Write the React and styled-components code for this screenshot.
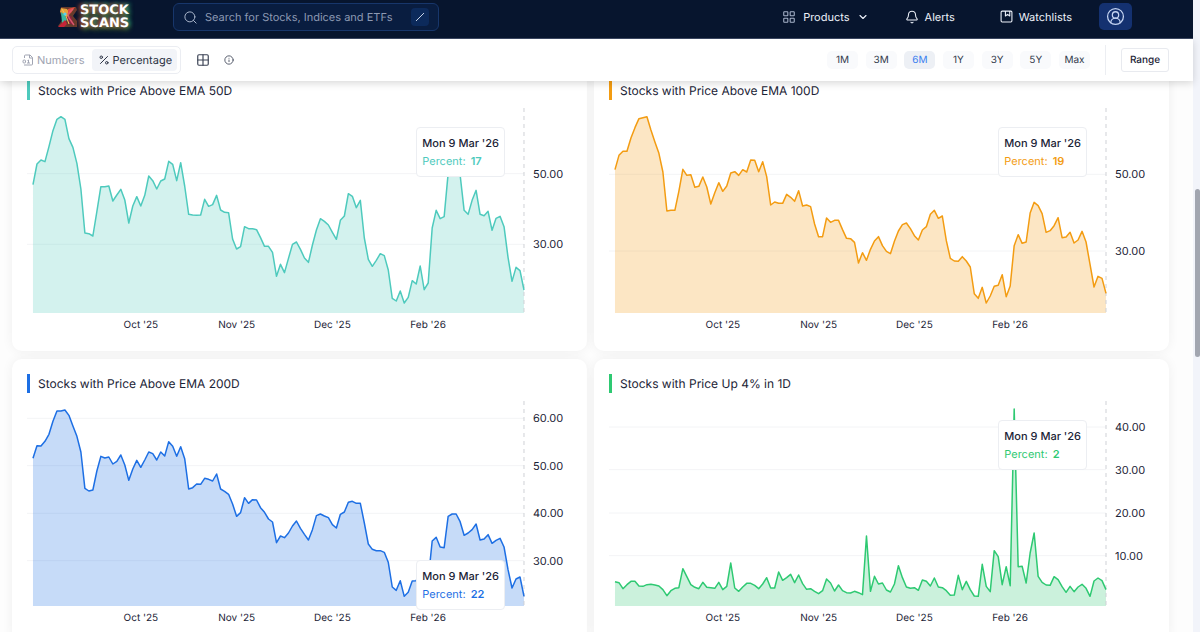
import React, { useState } from 'react';
import styled, { createGlobalStyle } from 'styled-components';
import { Search, LayoutGrid, ChevronDown, Bell, CircleUserRound, Percent, Grid2x2, Info } from 'lucide-react';

// Samples are in plot units, a larger number is lower on the plot
const STEP = 12;
const PLOT_HEIGHT = 615;

const EMA_50 = [
  314, 252, 240, 245, 200, 152, 118, 110, 118, 176, 202, 250, 327, 459, 461, 468, 395, 320, 320, 318, 363, 345, 328,
  360, 429, 378, 350, 378, 346, 288, 302, 327, 303, 297, 244, 253, 302, 248, 318, 403, 405, 406, 405, 358, 379, 374,
  346, 390, 397, 398, 477, 507, 500, 440, 446, 446, 449, 473, 499, 499, 517, 589, 553, 578, 535, 493, 486, 508, 534,
  547, 495, 450, 416, 424, 435, 457, 478, 421, 408, 341, 349, 383, 361, 474, 538, 559, 541, 521, 527, 570, 655, 663,
  633, 669, 652, 602, 612, 558, 629, 609, 444, 391, 416, 410, 280, 230, 225, 285, 391, 403, 361, 331, 403, 407, 394,
  451, 415, 409, 440, 532, 604, 562, 572, 630,
];

const EMA_100 = [
  269, 226, 214, 214, 174, 143, 116, 113, 110, 150, 186, 220, 276, 393, 391, 391, 334, 268, 286, 284, 322, 319, 291,
  321, 372, 338, 308, 334, 318, 279, 275, 286, 269, 276, 240, 241, 275, 245, 290, 375, 366, 370, 370, 343, 352, 364,
  332, 378, 375, 380, 432, 470, 470, 414, 427, 421, 421, 449, 475, 476, 487, 549, 518, 541, 508, 483, 470, 497, 514,
  521, 484, 453, 434, 429, 446, 467, 480, 450, 440, 403, 391, 415, 408, 482, 535, 543, 544, 530, 543, 561, 641, 655,
  622, 669, 648, 619, 616, 584, 650, 618, 497, 464, 490, 486, 399, 367, 377, 401, 457, 452, 437, 413, 473, 471, 457,
  489, 480, 454, 486, 553, 621, 589, 595, 640,
];

const EMA_200 = [
  266, 228, 229, 215, 194, 155, 124, 124, 121, 137, 169, 200, 247, 356, 364, 361, 304, 260, 265, 262, 283, 275, 256,
  286, 332, 298, 272, 293, 271, 247, 252, 271, 247, 259, 216, 230, 260, 231, 267, 358, 354, 343, 344, 326, 329, 334,
  313, 358, 365, 374, 403, 440, 429, 384, 401, 390, 391, 414, 428, 448, 457, 519, 499, 504, 490, 469, 454, 476, 494,
  511, 480, 438, 433, 439, 444, 465, 475, 434, 427, 398, 395, 401, 401, 460, 523, 539, 543, 543, 548, 578, 652, 662,
  633, 680, 668, 634, 633, 605, 655, 632, 514, 503, 532, 534, 440, 433, 433, 456, 497, 490, 480, 463, 511, 508, 495,
  521, 512, 506, 532, 600, 655, 628, 622, 680,
];

const UP_4 = [
  636, 639, 657, 645, 635, 635, 649, 650, 645, 644, 646, 649, 660, 678, 663, 656, 654, 597, 621, 645, 653, 657, 638,
  653, 654, 656, 638, 660, 650, 580, 655, 665, 652, 641, 641, 647, 657, 643, 624, 655, 655, 607, 632, 624, 614, 639,
  616, 642, 659, 657, 665, 672, 663, 628, 640, 664, 646, 663, 669, 670, 665, 669, 675, 499, 665, 620, 643, 640, 661,
  667, 643, 588, 624, 652, 656, 654, 662, 631, 635, 649, 625, 652, 654, 663, 677, 676, 617, 660, 635, 660, 679, 680,
  584, 650, 666, 543, 561, 645, 591, 648, 118, 591, 590, 640, 550, 490, 620, 638, 646, 647, 621, 630, 651, 668, 650,
  666, 652, 644, 656, 680, 634, 625, 633, 660,
];

const CHARTS = [
  {
    title: 'Stocks with Price Above EMA 50D',
    color: '#4ecabd',
    top: 84,
    samples: EMA_50,
    ticks: [{ label: '50.00', at: 281 }, { label: '30.00', at: 493 }],
    percent: 17,
    tooltipTop: 19,
  },
  {
    title: 'Stocks with Price Above EMA 100D',
    color: '#f39c12',
    top: 84,
    samples: EMA_100,
    ticks: [{ label: '50.00', at: 283 }, { label: '30.00', at: 513 }],
    percent: 19,
    tooltipTop: 19,
  },
  {
    title: 'Stocks with Price Above EMA 200D',
    color: '#1d6fe4',
    top: 94,
    samples: EMA_200,
    ticks: [
      { label: '60.00', at: 146 },
      { label: '50.00', at: 288 },
      { label: '40.00', at: 431 },
      { label: '30.00', at: 573 },
    ],
    percent: 22,
    tooltipTop: 159,
  },
  {
    title: 'Stocks with Price Up 4% in 1D',
    color: '#2ec972',
    top: 94,
    samples: UP_4,
    ticks: [
      { label: '40.00', at: 172 },
      { label: '30.00', at: 300 },
      { label: '20.00', at: 430 },
      { label: '10.00', at: 558 },
    ],
    percent: 2,
    tooltipTop: 19,
  },
];

const MONTHS = ["Oct '25", "Nov '25", "Dec '25", "Feb '26"];
const RANGES = ['1M', '3M', '6M', '1Y', '3Y', '5Y', 'Max'];

function Logo() {
  return (
    <LogoLink href="/" aria-label="Stock Scans">
      <svg width="22" height="26" viewBox="0 0 22 26" fill="none">
        <path d="M4 3h15l1 3-4 6 4 5v6H3l-2-1 5-7-3-6z" fill="#8f4a2c" opacity="0.7" />
        <path d="M4 4l6 1 3 4-2 4-4-2-4-3z" fill="#e8a13a" />
        <path d="M11 5l7-2-4 6-3 2z" fill="#e2483c" />
        <path d="M4 8l4 3 2 5-5 3z" fill="#3bb8a0" />
        <path d="M9 13l5-1 3 9-6-2z" fill="#8c1f3f" />
        <path d="M1 23l7-7 2 4-3 3z" fill="#c42438" />
        <path d="M16 5l-5 5 1 4 5 7" stroke="#d95a6c" strokeWidth="1.4" />
        <path d="M5 5l4 7 3 8" stroke="#f2c65a" strokeWidth="1" />
        <circle cx="8" cy="10" r="1.6" fill="#5ad1f0" />
      </svg>
      <LogoText>
        STOCK
        <br />
        SCANS
      </LogoText>
    </LogoLink>
  );
}

function WatchlistIcon() {
  return (
    <svg width="13" height="13" viewBox="0 0 24 24" fill="none" stroke="currentColor" strokeWidth="2">
      <rect x="2" y="2" width="20" height="20" rx="2" />
      <path d="M10 2v9l4-3 4 3V2" strokeLinejoin="round" />
    </svg>
  );
}

function NumbersIcon() {
  return (
    <svg width="12" height="12" viewBox="0 0 24 24" fill="none" stroke="currentColor" strokeWidth="2">
      <path d="M5 8V4a2 2 0 0 1 2-2h9l5 5v13a2 2 0 0 1-2 2H4" strokeLinejoin="round" />
      <path d="M15 2v6h6" />
      <rect x="2" y="12" width="5" height="6" rx="2" />
      <path d="M11 13l2-1v6M10 18h6" />
    </svg>
  );
}

function ChartCard({ chart }) {
  const { title, color, top, samples, ticks, percent, tooltipTop } = chart;
  const right = (samples.length - 1) * STEP;
  const bottom = top + PLOT_HEIGHT;
  const line = samples.map((y, i) => `${i * STEP},${y}`).join(' ');

  return (
    <Card>
      <CardTitle $color={color}>{title}</CardTitle>
      <ChartBody>
        <Plot>
          <PlotSvg viewBox={`-18 ${top} ${right + 18} ${PLOT_HEIGHT}`} preserveAspectRatio="none" aria-hidden="true">
            {ticks.map((tick) => (
              <GridLine key={tick.label} x1={-18} x2={right} y1={tick.at} y2={tick.at} />
            ))}
            <polygon points={`0,${bottom} ${line} ${right},${bottom}`} fill={color} fillOpacity="0.25" />
            <Cursor x1={right} x2={right} y1={top} y2={bottom} />
            <Line points={line} stroke={color} />
          </PlotSvg>
          <Tooltip $top={tooltipTop}>
            <TooltipDate>Mon 9 Mar '26</TooltipDate>
            <TooltipValue $color={color}>
              Percent: <b>{percent}</b>
            </TooltipValue>
          </Tooltip>
        </Plot>
        <YAxis>
          {ticks.map((tick) => (
            <YLabel key={tick.label} style={{ top: `${((tick.at - top) / PLOT_HEIGHT) * 100}%` }}>
              {tick.label}
            </YLabel>
          ))}
        </YAxis>
        <XAxis>
          {MONTHS.map((month) => (
            <span key={month}>{month}</span>
          ))}
        </XAxis>
      </ChartBody>
    </Card>
  );
}

function App() {
  const [mode, setMode] = useState('percentage');
  const [range, setRange] = useState('6M');

  return (
    <>
      <GlobalStyle />
      <Shell>
        <Page>
          <Header>
            <Logo />
            <SearchBox>
              <Search size={15} strokeWidth={1.6} />
              <SearchInput type="text" aria-label="Search" placeholder="Search for Stocks, Indices and ETFs" />
              <SlashKey>
                <svg width="10" height="10" viewBox="0 0 10 10" stroke="currentColor">
                  <path d="M1 9l8-8" />
                </svg>
              </SlashKey>
            </SearchBox>
            <Nav>
              <NavButton type="button">
                <LayoutGrid size={14} strokeWidth={1.8} />
                Products
                <ChevronDown size={12} strokeWidth={2.2} />
              </NavButton>
              <NavLink href="#alerts">
                <Bell size={14} strokeWidth={1.8} />
                Alerts
              </NavLink>
              <NavLink href="#watchlists">
                <WatchlistIcon />
                Watchlists
              </NavLink>
              <UserButton type="button" aria-label="Account">
                <CircleUserRound size={19} strokeWidth={1.6} />
              </UserButton>
            </Nav>
          </Header>

          <Toolbar>
            <Toggle>
              <ToggleButton type="button" $active={mode === 'numbers'} onClick={() => setMode('numbers')}>
                <NumbersIcon />
                Numbers
              </ToggleButton>
              <ToggleButton type="button" $active={mode === 'percentage'} onClick={() => setMode('percentage')}>
                <Percent size={12} strokeWidth={2} />
                Percentage
              </ToggleButton>
            </Toggle>
            <IconButton type="button" aria-label="Grid layout">
              <Grid2x2 size={14} strokeWidth={2} />
            </IconButton>
            <IconButton type="button" aria-label="Info">
              <Info size={10} strokeWidth={2} />
            </IconButton>
            <Ranges>
              {RANGES.map((item) => (
                <RangeButton key={item} type="button" $active={item === range} onClick={() => setRange(item)}>
                  {item}
                </RangeButton>
              ))}
            </Ranges>
            <Divider />
            <CustomRange type="button">Range</CustomRange>
          </Toolbar>

          <Cards>
            {CHARTS.map((chart) => (
              <ChartCard key={chart.title} chart={chart} />
            ))}
          </Cards>
        </Page>
        <ScrollTrack>
          <ScrollThumb />
        </ScrollTrack>
      </Shell>
    </>
  );
}

const GlobalStyle = createGlobalStyle`
  * {
    box-sizing: border-box;
  }

  body {
    margin: 0;
    background: #fdfdfd;
    color: #1b2336;
    font-family: Inter, "Liberation Sans", sans-serif;
    font-size: 11px;
    text-rendering: geometricPrecision;
  }

  button, input {
    margin: 0;
    padding: 0;
    border: 0;
    background: none;
    color: inherit;
    font: inherit;
    text-rendering: inherit;
  }

  button {
    cursor: pointer;
  }
`;

const Shell = styled.div`
  display: flex;
  height: 100vh;
  overflow: hidden;
`;

const Page = styled.div`
  flex: 1;
  min-width: 0;
`;

const Header = styled.header`
  position: relative;
  z-index: 3;
  display: flex;
  align-items: flex-start;
  height: 39px;
  padding: 3px 61px 0 57px;
  background: #07152e;
  border-bottom: 1px solid #3a4660;
`;

const LogoLink = styled.a`
  display: flex;
  align-items: center;
  gap: 1px;
  width: 116px;
  height: 28px;
  text-decoration: none;
`;

const LogoText = styled.span`
  color: #ffffff;
  font-family: "DejaVu Sans", sans-serif;
  font-size: 13px;
  font-weight: 700;
  line-height: 13px;
  text-shadow: -2px 0 4px #d8402f, 2px -1px 4px #1fa58a, 1px 2px 5px #5f9a2c;
`;

const SearchBox = styled.div`
  display: flex;
  align-items: center;
  gap: 7px;
  width: 266px;
  height: 28px;
  padding: 0 9px;
  border: 1px solid #17366b;
  border-radius: 6px;
  background: #091d40;
  color: #aab6cc;
`;

const SearchInput = styled.input`
  flex: 1;
  min-width: 0;
  outline: none;

  &::placeholder {
    color: #8d9ab3;
    opacity: 1;
  }
`;

const SlashKey = styled.span`
  display: flex;
  align-items: center;
  justify-content: center;
  width: 18px;
  height: 18px;
  border-radius: 4px;
  background: #0c2a5b;
  color: #c8d3e6;
`;

const Nav = styled.nav`
  display: flex;
  align-items: center;
  margin-left: auto;
  color: #eef2fa;
`;

const NavButton = styled.button`
  display: flex;
  align-items: center;
  gap: 7px;
  margin-right: 36px;

  svg:first-child {
    color: #a8b4ca;
  }
`;

const NavLink = styled.a`
  display: flex;
  align-items: center;
  gap: 6px;
  margin-right: 45px;
  color: inherit;
  text-decoration: none;

  &:last-of-type {
    margin-right: 27px;
  }
`;

const UserButton = styled.button`
  display: flex;
  align-items: center;
  justify-content: center;
  width: 33px;
  height: 27px;
  border-radius: 5px;
  background: #143170;
  color: #c5d4f2;
`;

const Toolbar = styled.div`
  position: relative;
  z-index: 2;
  display: flex;
  align-items: center;
  height: 42px;
  padding: 0 24px 0 12px;
  background: #ffffff;
  box-shadow: 0 2px 8px rgba(0, 0, 0, 0.16);
`;

const Toggle = styled.div`
  display: flex;
  align-items: center;
  gap: 2px;
  height: 28px;
  margin-right: 15px;
  padding: 0 3px;
  border: 1px solid #ebedf2;
  border-radius: 5px;
`;

const ToggleButton = styled.button`
  display: flex;
  align-items: center;
  gap: 3px;
  height: 22px;
  padding: 0 5px 0 6px;
  border-radius: 4px;
  background: ${(p) => (p.$active ? '#f2f4f8' : 'transparent')};
  color: ${(p) => (p.$active ? '#2c3345' : '#a0a4b2')};
`;

const IconButton = styled.button`
  display: flex;
  margin-right: 14px;
  color: #3b4254;
`;

const Ranges = styled.div`
  display: flex;
  justify-content: space-between;
  width: 263px;
  margin-left: auto;
`;

const RangeButton = styled.button`
  width: 31px;
  height: 18px;
  border-radius: 5px;
  background: ${(p) => (p.$active ? '#edf0f5' : '#f9fafc')};
  color: ${(p) => (p.$active ? '#3b7ff0' : '#333a4c')};
  font-size: 10px;
`;

const Divider = styled.span`
  width: 1px;
  height: 30px;
  margin: 0 15px;
  background: #eceef2;
`;

const CustomRange = styled.button`
  width: 48px;
  height: 24px;
  border: 1px solid #e8eaef;
  border-radius: 3px;
  font-size: 10px;
  font-weight: 500;
`;

const Cards = styled.main`
  display: grid;
  grid-template-columns: repeat(2, minmax(0, 1fr));
  gap: 8px 7px;
  margin-top: -15px;
  padding: 0 24px 0 12px;
`;

const Card = styled.section`
  padding: 15px;
  border-radius: 10px;
  background: #ffffff;
  box-shadow: 0 0 12px rgba(0, 0, 0, 0.06);
`;

const CardTitle = styled.h2`
  height: 19px;
  margin: 0 0 8px;
  padding-left: 8px;
  border-left: 3px solid ${(p) => p.$color};
  font-size: 12px;
  font-weight: 400;
  line-height: 19px;
`;

const ChartBody = styled.div`
  display: grid;
  grid-template-columns: minmax(0, 1fr) 48px;
`;

const Plot = styled.div`
  position: relative;
  height: 205px;
`;

const PlotSvg = styled.svg`
  display: block;
  width: 100%;
  height: 100%;
  overflow: visible;
`;

const GridLine = styled.line`
  stroke: #f3f4f6;
  vector-effect: non-scaling-stroke;
`;

const Cursor = styled.line`
  stroke: #cfd1d6;
  stroke-dasharray: 4 4;
  vector-effect: non-scaling-stroke;
`;

const Line = styled.polyline`
  fill: none;
  stroke-width: 1.5;
  stroke-linejoin: round;
  vector-effect: non-scaling-stroke;
`;

const Tooltip = styled.div`
  position: absolute;
  top: ${(p) => p.$top}px;
  right: 19px;
  padding: 6px 5px;
  border: 1px solid #eceef2;
  border-radius: 4px;
  background: #ffffff;
  line-height: 18px;
  white-space: nowrap;
`;

const TooltipDate = styled.div`
  font-weight: 500;
`;

const TooltipValue = styled.div`
  color: ${(p) => p.$color};

  b {
    margin-left: 2px;
    font-weight: 600;
  }
`;

const YAxis = styled.div`
  position: relative;
`;

const YLabel = styled.span`
  position: absolute;
  left: 9px;
  transform: translateY(-50%);
`;

const XAxis = styled.div`
  display: flex;
  height: 23px;
  padding: 0 48px 0 66px;
  font-size: 10px;
  line-height: 24px;

  span {
    flex: 1;
    text-align: center;
  }
`;

const ScrollTrack = styled.div`
  width: 7px;
  padding: 189px 0 0 2px;
  background: #f2f4fa;
`;

const ScrollThumb = styled.div`
  height: 168px;
  border-radius: 3px;
  background: #a2a6b0;
`;

export default App;
